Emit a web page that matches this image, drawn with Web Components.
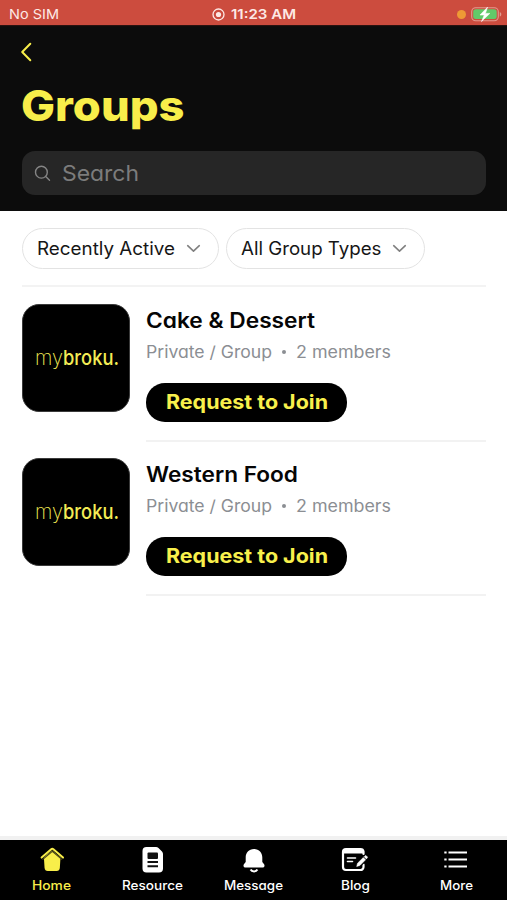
<!DOCTYPE html>
<html lang="en">
<head>
<meta charset="utf-8">
<title>Groups</title>
<style>
html,body{margin:0;padding:0;background:#fff}
body{width:507px;height:900px;overflow:hidden;font-family:Inter,"Liberation Sans",sans-serif;font-feature-settings:"cv11"}
</style>
</head>
<body>
<groups-screen></groups-screen>
<script>
const define=(name,html,Base=HTMLElement)=>customElements.define(name,class extends Base{
  constructor(){super();this.attachShadow({mode:'open'}).innerHTML=html;}
});

/* One line of text whose glyphs are widened or narrowed to fill the width in "w". */
customElements.define('fit-text',class extends HTMLElement{
  connectedCallback(){
    if(this.shadowRoot)return;
    const r=this.attachShadow({mode:'open'});
    const text=this.getAttribute('text');
    r.innerHTML='<style>:host{display:block;white-space:pre;flex:none}span{display:inline-block;transform-origin:0 50%}</style><span></span>';
    const s=r.querySelector('span');
    s.textContent=text;
    const w=+this.getAttribute('w');
    this.style.width=w+'px';
    const nat=s.getBoundingClientRect().width;
    s.style.transform='scaleX('+(w/nat)+')';
    s.style.marginRight=(w-nat)+'px';
  }
});

define('status-bar',`<style>
:host{display:grid;grid-template-columns:203px 1fr auto;align-items:center;height:25px;background:#cc4c3e;color:#fde9e5;padding:2px 5px 0 9px;box-sizing:border-box;box-shadow:0 1px 1px #2b1210;font-feature-settings:normal;line-height:24px}
.c,.r{display:flex;align-items:center}.c{gap:6px}
.l{font-size:13.5px}.t{font-size:13.5px;font-weight:600}
.r{gap:5px}.dot{width:9px;height:9px;border-radius:50%;background:#ee9a35}svg{display:block}
</style>
<fit-text class="l" text="No SIM" w="50"></fit-text>
<div class="c"><svg width="13" height="13" viewBox="0 0 13 13"><circle cx="6.5" cy="6.5" r="5.5" fill="none" stroke="#fde9e5" stroke-width="1.3"/><circle cx="6.500" cy="6.500" r="2.600" fill="#fde9e5"/></svg><fit-text class="t" text="11:23 AM" w="65"></fit-text></div>
<div class="r"><i class="dot"></i><svg width="31" height="17" viewBox="0 0 31 17"><rect x=".7" y="1.7" width="26.6" height="13" rx="4" fill="none" stroke="#e29b90" stroke-width="1.1"/><path d="M28.8 6v4.6c2-.8 2-3.8 0-4.6z" fill="#e29b90"/><rect x="2.2" y="3.3" width="23.5" height="9.8" rx="2.5" fill="#62ca69"/><path d="M16.5 1.2L9 9h4.3L10.5 15.6 18.8 7.4H14.4z" fill="#fff" stroke="#fff" stroke-width=".6"/></svg></div>`);

define('page-header',`<style>
:host{display:flex;flex-direction:column;height:186px;box-sizing:border-box;background:#0c0c0c;padding:17px 21px 0 22px}
.back{display:block;margin-left:-2px}
.title{font-size:42.5px;font-weight:780;line-height:50px;color:#f8ee4a;margin:19px 0 0 -1px}
.search{display:flex;align-items:center;height:44px;margin-top:20px;border-radius:13px;background:#262626;padding-left:12px;gap:11px;color:#7c7c7c;font-size:22px;line-height:44px}
</style>
<svg class="back" width="13" height="20" viewBox="0 0 13 20"><path d="M10.3 1.8L2.2 10l8.1 8.2" fill="none" stroke="#f8ee4a" stroke-width="2" stroke-linecap="round" stroke-linejoin="round"/></svg>
<fit-text class="title" text="Groups" w="163.5"></fit-text>
<div class="search"><svg width="17" height="17" viewBox="0 0 17 17" fill="none" stroke="#858585" stroke-width="1.4" stroke-linecap="round"><circle cx="7.4" cy="7.2" r="5.9"/><path d="M11.7 11.6l3.8 3.6"/></svg><fit-text text="Search" w="77"></fit-text></div>`);

customElements.define('filter-pill',class extends HTMLElement{
  connectedCallback(){
    this.attachShadow({mode:'open'}).innerHTML=`<style>
:host{display:flex;align-items:center;box-sizing:border-box;height:41px;border:1.4px solid #e3e3e3;border-radius:21px;padding:0 17px 0 14px;gap:10.5px;font-size:18px;line-height:40px;color:#161616}
</style><fit-text text="${this.getAttribute('label')}" w="${this.getAttribute('w')}"></fit-text><svg width="15" height="9" viewBox="0 0 15 9"><path d="M1.7 1.7l5.8 5.4 5.8-5.4" fill="none" stroke="#808080" stroke-width="1.6" stroke-linecap="round" stroke-linejoin="round"/></svg>`;
  }
});

define('brand-logo',`<style>
:host{display:flex;align-items:center;box-sizing:border-box;width:108px;height:108px;border-radius:17px;background:#000;border:1px solid #3a3a3a;padding:0 0 1px 11.5px;color:#f3ec55;font-size:20.5px;line-height:26px}
.m{font-weight:250}.b{font-weight:500}
</style><fit-text class="m" text="my" w="28"></fit-text><fit-text class="b" text="broku." w="56"></fit-text>`);

customElements.define('group-row',class extends HTMLElement{
  connectedCallback(){
    this.attachShadow({mode:'open'}).innerHTML=`<style>
:host{display:grid;grid-template-columns:108px 1fr;column-gap:16px;height:154px}
.info{display:flex;flex-direction:column;align-items:flex-start;box-sizing:border-box;height:136.5px;border-bottom:2px solid #f2f2f2}
brand-logo{margin-top:-1px}
.name{font-size:21px;font-weight:600;line-height:26px;color:#050505;margin:3px 0 0 0}
.meta{display:flex;align-items:center;font-size:16.6px;line-height:22px;color:#8b8e93;margin:7px 0 0 0}
.dot{width:4px;height:4px;border-radius:50%;background:#8b8e93;margin:0 10px 0 9.500px}
button{font:inherit;font-feature-settings:inherit;border:0;background:#000;color:#f8f04c;border-radius:19px;height:38.5px;width:201px;padding:0 0 0 20px;margin-top:20px;font-size:20px;font-weight:700;line-height:39px}
</style><brand-logo></brand-logo><div class="info"><fit-text class="name" text="${this.getAttribute('name').replace('&','&amp;')}" w="${this.getAttribute('w')}"></fit-text><div class="meta"><fit-text text="Private / Group" w="126"></fit-text><i class="dot"></i><fit-text text="2 members" w="95"></fit-text></div><button><fit-text text="Request to Join" w="162"></fit-text></button></div>`;
  }
});

customElements.define('tab-item',class extends HTMLElement{
  connectedCallback(){
    this.attachShadow({mode:'open'}).innerHTML=`<style>
:host{display:flex;flex-direction:column;align-items:center;padding-top:5px;gap:2px;color:#fff;font-size:12.5px;font-weight:500;line-height:20px}
:host([active]){color:#f8ee4a}::slotted(svg){display:block;width:30px;height:29px}
</style><slot></slot><fit-text text="${this.getAttribute('label')}" w="${this.getAttribute('w')}"></fit-text>`;
  }
});

define('tab-bar',`<style>
:host{display:grid;grid-template-columns:repeat(5,1fr);height:60px;background:#000;border-top:4px solid #f1f1f1;padding-left:1px}
</style>
<tab-item label="Home" w="39" active><svg viewBox="0 0 30 29"><path d="M15 5.500L23.500 12.500 22.800 23Q22.500 26 19.700 26H10.700Q7.900 26 7.600 23L6.900 12.500z" fill="#f8ee4a"/><path d="M5.500 14.600L15.300 6.200 25.100 14.600" fill="none" stroke="#4a4718" stroke-width="1.200"/><path d="M4.600 12.600L14.200 4.200Q15.300 3.300 16.400 4.200L26 12.600" fill="none" stroke="#f8ee4a" stroke-width="2" stroke-linecap="round"/></svg></tab-item>
<tab-item label="Resource" w="61"><svg viewBox="0 0 30 29"><path d="M8.500 2h9.500q1.500 0 2.500 1l3.500 3.500q1 1 1 2.500V23.500a4 4 0 0 1-4 4H8.500a4 4 0 0 1-4-4V6a4 4 0 0 1 4-4z" fill="#fff"/><rect x="9.500" y="7.500" width="10.500" height="6.500" rx="1" fill="#111"/><path d="M9.500 17h10.500M9.500 21.200h10.500" stroke="#111" stroke-width="1.900"/></svg></tab-item>
<tab-item label="Message" w="59"><svg viewBox="0 0 30 29"><path d="M15 4c5.200 0 8.300 3.700 8.300 8.500v4.500l1.800 2.300c1 1.600.1 3.200-1.600 3.200h-17c-1.700 0-2.600-1.600-1.600-3.200L6.700 17v-4.500C6.700 7.700 9.800 4 15 4z" fill="#fff"/><path d="M11.600 24.500a3.700 3.200 0 0 0 6.800 0" fill="none" stroke="#fff" stroke-width="2"/></svg></tab-item>
<tab-item label="Blog" w="29"><svg viewBox="0 0 30 29"><path d="M23.500 9V6.500A3 3 0 0 0 20.500 4H6a3 3 0 0 0-3 3V22a3 3 0 0 0 3 3H20.500a3 3 0 0 0 3-3v-2.500" fill="none" stroke="#fff" stroke-width="2.200" stroke-linecap="round"/><path d="M3 5h20.500v3.500h-20.500z" fill="#fff"/><path d="M7.500 13h8M7.500 16.500h5" stroke="#fff" stroke-width="1.600" stroke-linecap="round"/><path d="M17.500 21.500l8-8.500" fill="none" stroke="#000" stroke-width="5"/><path d="M16.700 21.500l.8-3.300 5.800-5.700 2.300 2.300-5.700 5.700zM24.100 11.700l1-1q.6-.5 1.100 0l1.100 1.100q.5.600 0 1.100l-1 1z" fill="#fff" stroke="#fff" stroke-width=".5"/></svg></tab-item>
<tab-item label="More" w="33"><svg viewBox="0 0 30 29"><g stroke="#fff" stroke-width="2.200"><path d="M7.500 7.500h18.500M7.500 14.500h18.500M7.500 21.500h18.500"/><path d="M3.300 7.500h2.300M3.300 14.500h2.300M3.300 21.500h2.300"/></g></svg></tab-item>`);

define('groups-screen',`<style>
:host{display:flex;flex-direction:column;width:507px;height:900px}
status-bar{position:relative}
main{flex:1;padding:17px 21px 0 22px}
.filters{display:flex;gap:7px;padding-bottom:16px;border-bottom:2px solid #f3f3f3;margin-bottom:18px}
</style>
<status-bar></status-bar><page-header></page-header>
<main><div class="filters"><filter-pill label="Recently Active" w="138"></filter-pill><filter-pill label="All Group Types" w="140.5"></filter-pill></div>
<group-row name="Cake & Dessert" w="169"></group-row><group-row name="Western Food" w="152"></group-row></main>
<tab-bar></tab-bar>`);
</script>
</body>
</html>
